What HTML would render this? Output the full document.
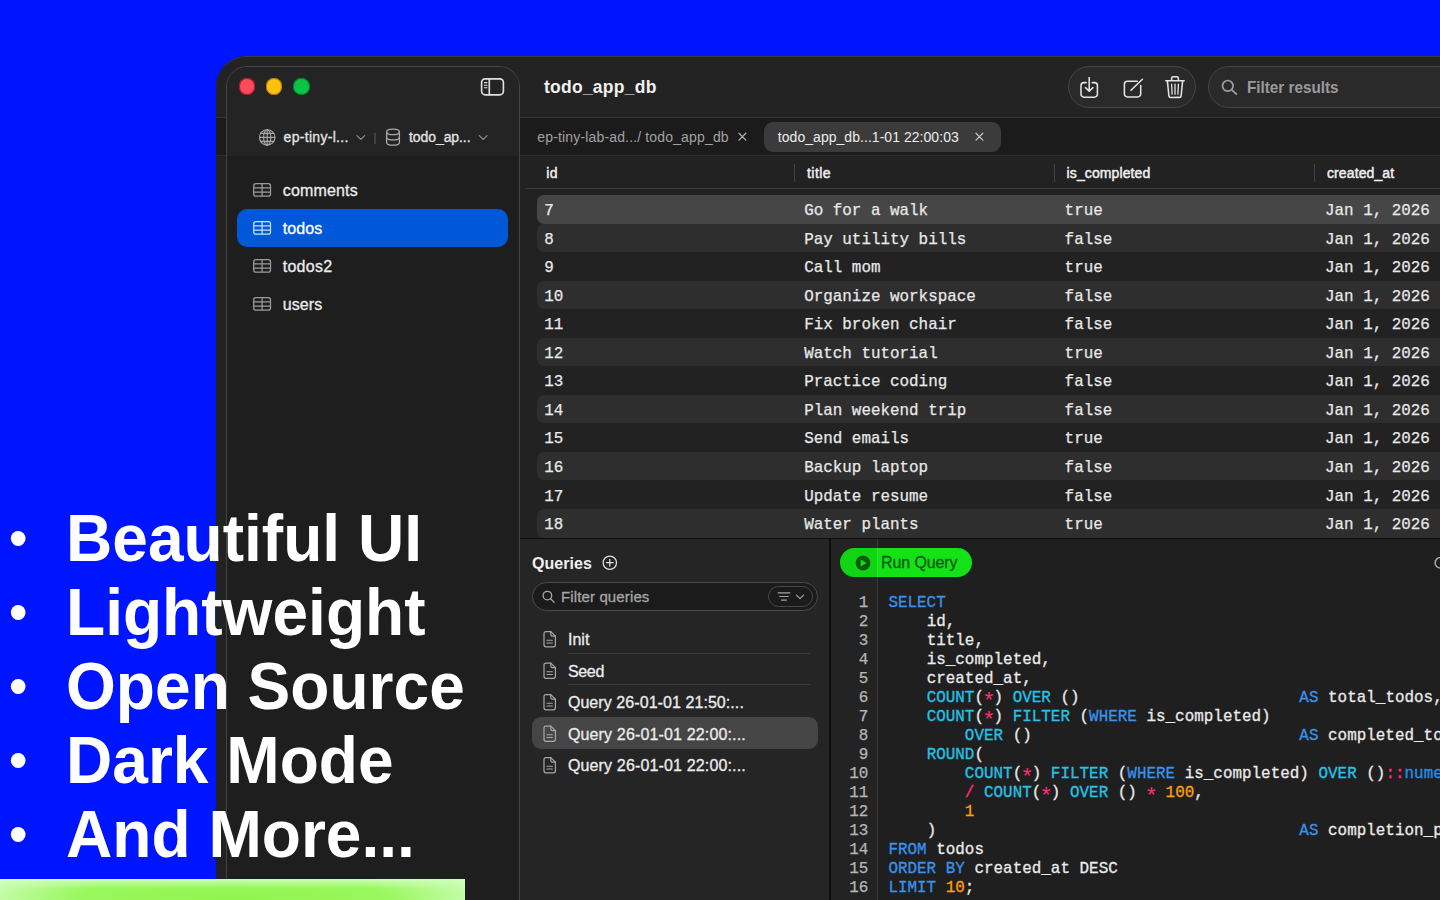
<!DOCTYPE html>
<html lang="en">
<head>
<meta charset="utf-8">
<title>todo_app_db</title>
<style>
*{box-sizing:border-box;margin:0;padding:0}
html,body{width:1440px;height:900px;overflow:hidden;background:#0015ff;font-family:"Liberation Sans",sans-serif;color:#e8e8e8}
.m{font-family:"Liberation Mono",monospace}
.a{position:absolute}
#win{position:absolute;left:216px;top:56px;width:1300px;height:900px;background:#222222;border-top-left-radius:31px;overflow:hidden}
#w{position:absolute;left:-216px;top:-56px;width:1516px;height:956px}
#wtop{left:216px;top:56px;width:1300px;height:30px;border-top:1px solid #3c3c3c;border-left:1px solid #2c2c2c;border-top-left-radius:31px}
#toolbar{left:216px;top:56px;width:1300px;height:61px;background:#232323}
#tabband{left:216px;top:117px;width:1300px;height:39px;background:#1b1b1b;border-top:1px solid #363636;border-bottom:1px solid #2e2e2e}
#side{left:226px;top:66px;width:294px;height:900px;background:#1e1e1e;border:1px solid #444444;border-bottom:none;border-radius:21px 21px 0 0;overflow:hidden}
#sidehead{left:0;top:0;width:294px;height:89px;background:#242424}
.tl{width:16.4px;height:16.4px;border-radius:50%;top:78.2px}
.pill{border:1px solid #454545;background:#2a2a2a;border-radius:22px}
.row{left:537px;width:960px;height:28.55px;border-radius:7px 0 0 7px}
.q{left:532px;width:285.5px;height:31.5px;border-radius:9px}
svg{position:absolute;overflow:visible}
.big{position:absolute;left:0;font-weight:700;color:#fff;white-space:pre}
</style>
</head>
<body>
<div id="win"><div id="w">
<div id="toolbar" class="a"></div>
<div id="tabband" class="a"></div>
<div id="wtop" class="a"></div>
<span style="position:absolute;left:544px;top:76.20px;line-height:22px;font-size:17.5px;font-weight:700;color:#f0f0f0;white-space:pre;letter-spacing:0.249px;">todo_app_db</span>
<div class="a pill" style="left:1068px;top:65.5px;width:128.2px;height:42.5px"></div>
<div class="a pill" style="left:1208px;top:65.5px;width:300px;height:42.5px"></div>
<svg style="left:0;top:0" width="1440" height="900" viewBox="0 0 1440 900" fill="none" stroke="#e4e4e4" stroke-width="1.55" stroke-linecap="round" stroke-linejoin="round">
<path d="M1086.2 82.6h-2.2a3 3 0 0 0-3 3v8.6a3 3 0 0 0 3 3h10.4a3 3 0 0 0 3-3v-8.6a3 3 0 0 0-3-3h-2.2"/>
<path d="M1089.2 77.6v13.4M1085.5 87.6l3.7 3.6 3.7-3.6"/>
<path d="M1137.2 81.3h-9.8a3 3 0 0 0-3 3v9.6a3 3 0 0 0 3 3h10.3a3 3 0 0 0 3-3v-8.4"/>
<path d="M1131 90.3L1142.4 79.2"/>
<path d="M1165.8 80.8h18.4M1171.6 80.6v-2.2a1.6 1.6 0 0 1 1.6-1.6h3.6a1.6 1.6 0 0 1 1.6 1.6v2.2"/>
<path d="M1167.4 81.2l1.5 14.6a1.8 1.8 0 0 0 1.8 1.6h8.6a1.8 1.8 0 0 0 1.8-1.6l1.5-14.6"/>
<path d="M1171.6 84.2l.5 10M1175 84.2v10M1178.4 84.2l-.5 10" stroke-width="1.3"/>
</svg>
<svg style="left:0;top:0" width="1440" height="900" viewBox="0 0 1440 900" fill="none" stroke="#a0a0a0" stroke-width="1.7" stroke-linecap="round">
<circle cx="1227.8" cy="85.8" r="5.3"/><path d="M1231.8 89.8l4.6 4.4"/></svg>
<span style="position:absolute;left:1247px;top:76.50px;line-height:21px;font-size:16.6px;font-weight:700;color:#9a9a9a;white-space:pre;transform:scaleX(0.9186);transform-origin:0 50%;">Filter results</span>
<span style="position:absolute;left:537.3px;top:127.80px;line-height:18px;font-size:14px;font-weight:400;color:#a2a2a2;white-space:pre;letter-spacing:0.156px;">ep-tiny-lab-ad.../ todo_app_db</span>
<div class="a" style="left:764px;top:121.5px;width:237px;height:30.5px;border-radius:9px;background:#3b3b3b"></div>
<span style="position:absolute;left:777.8px;top:127.80px;line-height:18px;font-size:14px;font-weight:400;color:#ececec;white-space:pre;letter-spacing:0.043px;">todo_app_db...1-01 22:00:03</span>
<svg style="left:0;top:0" width="1440" height="900" viewBox="0 0 1440 900" fill="none" stroke-width="1.3" stroke-linecap="round">
<path d="M739 133.3l6.8 6.8M745.8 133.3l-6.8 6.8" stroke="#b0b0b0"/>
<path d="M976 133.3l6.8 6.8M982.8 133.3l-6.8 6.8" stroke="#c4c4c4"/></svg>
<div id="side" class="a"><div id="sidehead" class="a"></div></div>
<div class="a tl" style="left:238.9px;background:#ff4a5a;box-shadow:inset 0 0 0 1px rgba(150,10,25,.75)"></div>
<div class="a tl" style="left:266px;background:#ffc20a;box-shadow:inset 0 0 0 1px rgba(150,100,0,.7)"></div>
<div class="a tl" style="left:293.3px;background:#0bc446;box-shadow:inset 0 0 0 1px rgba(0,100,30,.7)"></div>
<svg style="left:0;top:0" width="1440" height="900" viewBox="0 0 1440 900" fill="none" stroke="#e0e0e0" stroke-width="1.65" stroke-linecap="round">
<rect x="481.6" y="78.8" width="21.8" height="16" rx="3.6"/><path d="M489.3 79v15.6"/>
<path d="M484.4 82.6h2.6M484.4 85.2h2.6M484.4 87.8h2.6" stroke-width="1.1"/></svg>
<svg style="left:0;top:0" width="1440" height="900" viewBox="0 0 1440 900" fill="none" stroke="#a8a8a8" stroke-width="1.15" stroke-linecap="round" stroke-linejoin="round">
<circle cx="267.2" cy="137.4" r="7.7"/>
<ellipse cx="267.2" cy="137.4" rx="3.6" ry="7.7"/>
<path d="M267.2 129.7v15.4M259.5 137.4h15.4M260.7 133.4h13M260.7 141.4h13"/>
<path d="M357 135.6l3.8 3.8 3.8-3.8" stroke="#8c8c8c" stroke-width="1.3"/>
<path d="M375 133v10.6" stroke="#555" stroke-width="1.2"/>
<ellipse cx="393" cy="131.9" rx="6.4" ry="2.7" stroke-width="1.3"/>
<path d="M386.6 131.9v10.6c0 1.5 2.9 2.7 6.4 2.7s6.4-1.2 6.4-2.7v-10.6" stroke-width="1.3"/>
<path d="M386.6 137.2c0 1.5 2.9 2.7 6.4 2.7s6.4-1.2 6.4-2.7" stroke-width="1.3"/>
<path d="M479.4 135.6l3.8 3.8 3.8-3.8" stroke="#8c8c8c" stroke-width="1.3"/>
</svg>
<span style="position:absolute;left:283.6px;top:128.40px;line-height:18px;font-size:14px;font-weight:400;color:#e4e4e4;white-space:pre;-webkit-text-stroke:0.3px #e4e4e4;letter-spacing:0.294px;">ep-tiny-l...</span>
<span style="position:absolute;left:409px;top:128.40px;line-height:18px;font-size:14px;font-weight:400;color:#e4e4e4;white-space:pre;-webkit-text-stroke:0.3px #e4e4e4;letter-spacing:-0.078px;">todo_ap...</span>
<div class="a" style="left:237.2px;top:208.5px;width:271.2px;height:38px;border-radius:10px;background:#0058d8"></div>
<svg style="left:0;top:0" width="1440" height="900" viewBox="0 0 1440 900" fill="none" stroke="#9c9c9c" stroke-width="1.25"><rect x="253.7" y="183.70" width="16.8" height="12.5" rx="2.2"/><path d="M262.1 183.70v12.5M253.7 187.87h16.8M253.7 192.03h16.8"/></svg>
<span style="position:absolute;left:282.8px;top:180.80px;line-height:20px;font-size:16px;font-weight:400;color:#ececec;white-space:pre;-webkit-text-stroke:0.3px #ececec;letter-spacing:0.150px;">comments</span>
<svg style="left:0;top:0" width="1440" height="900" viewBox="0 0 1440 900" fill="none" stroke="#c9defa" stroke-width="1.25"><rect x="253.7" y="221.70" width="16.8" height="12.5" rx="2.2"/><path d="M262.1 221.70v12.5M253.7 225.87h16.8M253.7 230.03h16.8"/></svg>
<span style="position:absolute;left:282.8px;top:218.80px;line-height:20px;font-size:16px;font-weight:400;color:#ffffff;white-space:pre;-webkit-text-stroke:0.3px #ffffff;letter-spacing:0.072px;">todos</span>
<svg style="left:0;top:0" width="1440" height="900" viewBox="0 0 1440 900" fill="none" stroke="#9c9c9c" stroke-width="1.25"><rect x="253.7" y="259.70" width="16.8" height="12.5" rx="2.2"/><path d="M262.1 259.70v12.5M253.7 263.87h16.8M253.7 268.03h16.8"/></svg>
<span style="position:absolute;left:282.8px;top:256.80px;line-height:20px;font-size:16px;font-weight:400;color:#ececec;white-space:pre;-webkit-text-stroke:0.3px #ececec;letter-spacing:0.242px;">todos2</span>
<svg style="left:0;top:0" width="1440" height="900" viewBox="0 0 1440 900" fill="none" stroke="#9c9c9c" stroke-width="1.25"><rect x="253.7" y="297.70" width="16.8" height="12.5" rx="2.2"/><path d="M262.1 297.70v12.5M253.7 301.87h16.8M253.7 306.03h16.8"/></svg>
<span style="position:absolute;left:282.8px;top:294.80px;line-height:20px;font-size:16px;font-weight:400;color:#ececec;white-space:pre;-webkit-text-stroke:0.3px #ececec;letter-spacing:0.075px;">users</span>
<div class="a" style="left:520px;top:156px;width:1000px;height:382px;background:#222222"></div>
<div class="a" style="left:525.5px;top:187.8px;width:1000px;height:1px;background:#3c3c3c"></div>
<div class="a" style="left:794px;top:163.5px;width:1px;height:18px;background:#424242"></div>
<div class="a" style="left:1054px;top:163.5px;width:1px;height:18px;background:#424242"></div>
<div class="a" style="left:1314px;top:163.5px;width:1px;height:18px;background:#424242"></div>
<span style="position:absolute;left:546.3px;top:163.70px;line-height:18px;font-size:14px;font-weight:400;color:#f0f0f0;white-space:pre;-webkit-text-stroke:0.45px #f0f0f0;letter-spacing:0.297px;">id</span>
<span style="position:absolute;left:807px;top:163.70px;line-height:18px;font-size:14px;font-weight:400;color:#f0f0f0;white-space:pre;-webkit-text-stroke:0.45px #f0f0f0;letter-spacing:0.441px;">title</span>
<span style="position:absolute;left:1066.6px;top:163.70px;line-height:18px;font-size:14px;font-weight:400;color:#f0f0f0;white-space:pre;-webkit-text-stroke:0.45px #f0f0f0;letter-spacing:0.108px;">is_completed</span>
<span style="position:absolute;left:1327px;top:163.70px;line-height:18px;font-size:14px;font-weight:400;color:#f0f0f0;white-space:pre;-webkit-text-stroke:0.45px #f0f0f0;letter-spacing:0.103px;">created_at</span>
<div class="a row" style="top:195.00px;background:#464646;height:28.55px"></div>
<span class="m" style="position:absolute;left:544.3px;top:201.08px;line-height:20px;font-size:15.9px;font-weight:400;color:#e8e8e8;white-space:pre;-webkit-text-stroke:0.25px #e8e8e8;">7</span>
<span class="m" style="position:absolute;left:804.2px;top:201.08px;line-height:20px;font-size:15.9px;font-weight:400;color:#e8e8e8;white-space:pre;-webkit-text-stroke:0.25px #e8e8e8;">Go for a walk</span>
<span class="m" style="position:absolute;left:1064.6px;top:201.08px;line-height:20px;font-size:15.9px;font-weight:400;color:#e8e8e8;white-space:pre;-webkit-text-stroke:0.25px #e8e8e8;">true</span>
<span class="m" style="position:absolute;left:1325px;top:201.08px;line-height:20px;font-size:15.9px;font-weight:400;color:#e8e8e8;white-space:pre;-webkit-text-stroke:0.25px #e8e8e8;">Jan 1, 2026</span>
<div class="a row" style="top:223.55px;background:#2e2e2e;height:28.55px"></div>
<span class="m" style="position:absolute;left:544.3px;top:229.63px;line-height:20px;font-size:15.9px;font-weight:400;color:#e8e8e8;white-space:pre;-webkit-text-stroke:0.25px #e8e8e8;">8</span>
<span class="m" style="position:absolute;left:804.2px;top:229.63px;line-height:20px;font-size:15.9px;font-weight:400;color:#e8e8e8;white-space:pre;-webkit-text-stroke:0.25px #e8e8e8;">Pay utility bills</span>
<span class="m" style="position:absolute;left:1064.6px;top:229.63px;line-height:20px;font-size:15.9px;font-weight:400;color:#e8e8e8;white-space:pre;-webkit-text-stroke:0.25px #e8e8e8;">false</span>
<span class="m" style="position:absolute;left:1325px;top:229.63px;line-height:20px;font-size:15.9px;font-weight:400;color:#e8e8e8;white-space:pre;-webkit-text-stroke:0.25px #e8e8e8;">Jan 1, 2026</span>
<span class="m" style="position:absolute;left:544.3px;top:258.18px;line-height:20px;font-size:15.9px;font-weight:400;color:#e8e8e8;white-space:pre;-webkit-text-stroke:0.25px #e8e8e8;">9</span>
<span class="m" style="position:absolute;left:804.2px;top:258.18px;line-height:20px;font-size:15.9px;font-weight:400;color:#e8e8e8;white-space:pre;-webkit-text-stroke:0.25px #e8e8e8;">Call mom</span>
<span class="m" style="position:absolute;left:1064.6px;top:258.18px;line-height:20px;font-size:15.9px;font-weight:400;color:#e8e8e8;white-space:pre;-webkit-text-stroke:0.25px #e8e8e8;">true</span>
<span class="m" style="position:absolute;left:1325px;top:258.18px;line-height:20px;font-size:15.9px;font-weight:400;color:#e8e8e8;white-space:pre;-webkit-text-stroke:0.25px #e8e8e8;">Jan 1, 2026</span>
<div class="a row" style="top:280.65px;background:#2e2e2e;height:28.55px"></div>
<span class="m" style="position:absolute;left:544.3px;top:286.72px;line-height:20px;font-size:15.9px;font-weight:400;color:#e8e8e8;white-space:pre;-webkit-text-stroke:0.25px #e8e8e8;">10</span>
<span class="m" style="position:absolute;left:804.2px;top:286.72px;line-height:20px;font-size:15.9px;font-weight:400;color:#e8e8e8;white-space:pre;-webkit-text-stroke:0.25px #e8e8e8;">Organize workspace</span>
<span class="m" style="position:absolute;left:1064.6px;top:286.72px;line-height:20px;font-size:15.9px;font-weight:400;color:#e8e8e8;white-space:pre;-webkit-text-stroke:0.25px #e8e8e8;">false</span>
<span class="m" style="position:absolute;left:1325px;top:286.72px;line-height:20px;font-size:15.9px;font-weight:400;color:#e8e8e8;white-space:pre;-webkit-text-stroke:0.25px #e8e8e8;">Jan 1, 2026</span>
<span class="m" style="position:absolute;left:544.3px;top:315.27px;line-height:20px;font-size:15.9px;font-weight:400;color:#e8e8e8;white-space:pre;-webkit-text-stroke:0.25px #e8e8e8;">11</span>
<span class="m" style="position:absolute;left:804.2px;top:315.27px;line-height:20px;font-size:15.9px;font-weight:400;color:#e8e8e8;white-space:pre;-webkit-text-stroke:0.25px #e8e8e8;">Fix broken chair</span>
<span class="m" style="position:absolute;left:1064.6px;top:315.27px;line-height:20px;font-size:15.9px;font-weight:400;color:#e8e8e8;white-space:pre;-webkit-text-stroke:0.25px #e8e8e8;">false</span>
<span class="m" style="position:absolute;left:1325px;top:315.27px;line-height:20px;font-size:15.9px;font-weight:400;color:#e8e8e8;white-space:pre;-webkit-text-stroke:0.25px #e8e8e8;">Jan 1, 2026</span>
<div class="a row" style="top:337.75px;background:#2e2e2e;height:28.55px"></div>
<span class="m" style="position:absolute;left:544.3px;top:343.82px;line-height:20px;font-size:15.9px;font-weight:400;color:#e8e8e8;white-space:pre;-webkit-text-stroke:0.25px #e8e8e8;">12</span>
<span class="m" style="position:absolute;left:804.2px;top:343.82px;line-height:20px;font-size:15.9px;font-weight:400;color:#e8e8e8;white-space:pre;-webkit-text-stroke:0.25px #e8e8e8;">Watch tutorial</span>
<span class="m" style="position:absolute;left:1064.6px;top:343.82px;line-height:20px;font-size:15.9px;font-weight:400;color:#e8e8e8;white-space:pre;-webkit-text-stroke:0.25px #e8e8e8;">true</span>
<span class="m" style="position:absolute;left:1325px;top:343.82px;line-height:20px;font-size:15.9px;font-weight:400;color:#e8e8e8;white-space:pre;-webkit-text-stroke:0.25px #e8e8e8;">Jan 1, 2026</span>
<span class="m" style="position:absolute;left:544.3px;top:372.38px;line-height:20px;font-size:15.9px;font-weight:400;color:#e8e8e8;white-space:pre;-webkit-text-stroke:0.25px #e8e8e8;">13</span>
<span class="m" style="position:absolute;left:804.2px;top:372.38px;line-height:20px;font-size:15.9px;font-weight:400;color:#e8e8e8;white-space:pre;-webkit-text-stroke:0.25px #e8e8e8;">Practice coding</span>
<span class="m" style="position:absolute;left:1064.6px;top:372.38px;line-height:20px;font-size:15.9px;font-weight:400;color:#e8e8e8;white-space:pre;-webkit-text-stroke:0.25px #e8e8e8;">false</span>
<span class="m" style="position:absolute;left:1325px;top:372.38px;line-height:20px;font-size:15.9px;font-weight:400;color:#e8e8e8;white-space:pre;-webkit-text-stroke:0.25px #e8e8e8;">Jan 1, 2026</span>
<div class="a row" style="top:394.85px;background:#2e2e2e;height:28.55px"></div>
<span class="m" style="position:absolute;left:544.3px;top:400.93px;line-height:20px;font-size:15.9px;font-weight:400;color:#e8e8e8;white-space:pre;-webkit-text-stroke:0.25px #e8e8e8;">14</span>
<span class="m" style="position:absolute;left:804.2px;top:400.93px;line-height:20px;font-size:15.9px;font-weight:400;color:#e8e8e8;white-space:pre;-webkit-text-stroke:0.25px #e8e8e8;">Plan weekend trip</span>
<span class="m" style="position:absolute;left:1064.6px;top:400.93px;line-height:20px;font-size:15.9px;font-weight:400;color:#e8e8e8;white-space:pre;-webkit-text-stroke:0.25px #e8e8e8;">false</span>
<span class="m" style="position:absolute;left:1325px;top:400.93px;line-height:20px;font-size:15.9px;font-weight:400;color:#e8e8e8;white-space:pre;-webkit-text-stroke:0.25px #e8e8e8;">Jan 1, 2026</span>
<span class="m" style="position:absolute;left:544.3px;top:429.47px;line-height:20px;font-size:15.9px;font-weight:400;color:#e8e8e8;white-space:pre;-webkit-text-stroke:0.25px #e8e8e8;">15</span>
<span class="m" style="position:absolute;left:804.2px;top:429.47px;line-height:20px;font-size:15.9px;font-weight:400;color:#e8e8e8;white-space:pre;-webkit-text-stroke:0.25px #e8e8e8;">Send emails</span>
<span class="m" style="position:absolute;left:1064.6px;top:429.47px;line-height:20px;font-size:15.9px;font-weight:400;color:#e8e8e8;white-space:pre;-webkit-text-stroke:0.25px #e8e8e8;">true</span>
<span class="m" style="position:absolute;left:1325px;top:429.47px;line-height:20px;font-size:15.9px;font-weight:400;color:#e8e8e8;white-space:pre;-webkit-text-stroke:0.25px #e8e8e8;">Jan 1, 2026</span>
<div class="a row" style="top:451.95px;background:#2e2e2e;height:28.55px"></div>
<span class="m" style="position:absolute;left:544.3px;top:458.02px;line-height:20px;font-size:15.9px;font-weight:400;color:#e8e8e8;white-space:pre;-webkit-text-stroke:0.25px #e8e8e8;">16</span>
<span class="m" style="position:absolute;left:804.2px;top:458.02px;line-height:20px;font-size:15.9px;font-weight:400;color:#e8e8e8;white-space:pre;-webkit-text-stroke:0.25px #e8e8e8;">Backup laptop</span>
<span class="m" style="position:absolute;left:1064.6px;top:458.02px;line-height:20px;font-size:15.9px;font-weight:400;color:#e8e8e8;white-space:pre;-webkit-text-stroke:0.25px #e8e8e8;">false</span>
<span class="m" style="position:absolute;left:1325px;top:458.02px;line-height:20px;font-size:15.9px;font-weight:400;color:#e8e8e8;white-space:pre;-webkit-text-stroke:0.25px #e8e8e8;">Jan 1, 2026</span>
<span class="m" style="position:absolute;left:544.3px;top:486.57px;line-height:20px;font-size:15.9px;font-weight:400;color:#e8e8e8;white-space:pre;-webkit-text-stroke:0.25px #e8e8e8;">17</span>
<span class="m" style="position:absolute;left:804.2px;top:486.57px;line-height:20px;font-size:15.9px;font-weight:400;color:#e8e8e8;white-space:pre;-webkit-text-stroke:0.25px #e8e8e8;">Update resume</span>
<span class="m" style="position:absolute;left:1064.6px;top:486.57px;line-height:20px;font-size:15.9px;font-weight:400;color:#e8e8e8;white-space:pre;-webkit-text-stroke:0.25px #e8e8e8;">false</span>
<span class="m" style="position:absolute;left:1325px;top:486.57px;line-height:20px;font-size:15.9px;font-weight:400;color:#e8e8e8;white-space:pre;-webkit-text-stroke:0.25px #e8e8e8;">Jan 1, 2026</span>
<div class="a row" style="top:509.05px;background:#2e2e2e;height:28.55px"></div>
<span class="m" style="position:absolute;left:544.3px;top:515.12px;line-height:20px;font-size:15.9px;font-weight:400;color:#e8e8e8;white-space:pre;-webkit-text-stroke:0.25px #e8e8e8;">18</span>
<span class="m" style="position:absolute;left:804.2px;top:515.12px;line-height:20px;font-size:15.9px;font-weight:400;color:#e8e8e8;white-space:pre;-webkit-text-stroke:0.25px #e8e8e8;">Water plants</span>
<span class="m" style="position:absolute;left:1064.6px;top:515.12px;line-height:20px;font-size:15.9px;font-weight:400;color:#e8e8e8;white-space:pre;-webkit-text-stroke:0.25px #e8e8e8;">true</span>
<span class="m" style="position:absolute;left:1325px;top:515.12px;line-height:20px;font-size:15.9px;font-weight:400;color:#e8e8e8;white-space:pre;-webkit-text-stroke:0.25px #e8e8e8;">Jan 1, 2026</span>
<div class="a" style="left:520px;top:537.6px;width:1000px;height:1.4px;background:#0c0c0c"></div>
<div class="a" style="left:520px;top:539px;width:309px;height:400px;background:#252525"></div>
<span style="position:absolute;left:532px;top:554.00px;line-height:20px;font-size:16px;font-weight:700;color:#f0f0f0;white-space:pre;letter-spacing:0.058px;">Queries</span>
<svg style="left:0;top:0" width="1440" height="900" viewBox="0 0 1440 900" fill="none" stroke="#e0e0e0" stroke-width="1.25" stroke-linecap="round">
<circle cx="609.8" cy="562.7" r="6.7"/><path d="M606.4 562.7h6.8M609.8 559.3v6.8"/></svg>
<div class="a" style="left:532px;top:582px;width:285.5px;height:29px;border-radius:15px;background:#1b1b1b;border:1px solid #4a4a4a"></div>
<div class="a" style="left:768px;top:586.2px;width:45px;height:20.6px;border-radius:11px;border:1px solid #484848"></div>
<svg style="left:0;top:0" width="1440" height="900" viewBox="0 0 1440 900" fill="none" stroke="#a6a6a6" stroke-width="1.3" stroke-linecap="round" stroke-linejoin="round">
<circle cx="547.4" cy="595.6" r="4.3"/><path d="M550.6 598.8l3.6 3.6"/>
<path d="M778.2 592.9h11.6M779.8 596.5h8.4M781.6 600.1h4.8" stroke-width="1.2"/>
<path d="M796.4 595.2l3.6 3.4 3.6-3.4" stroke-width="1.15"/></svg>
<span style="position:absolute;left:561px;top:587.10px;line-height:19px;font-size:15px;font-weight:400;color:#a6a6a6;white-space:pre;-webkit-text-stroke:0.3px #a6a6a6;letter-spacing:0.128px;">Filter queries</span>
<svg style="left:0;top:0" width="1440" height="900" viewBox="0 0 1440 900" fill="none" stroke="#a8a8a8" stroke-width="1.2" stroke-linejoin="round" stroke-linecap="round"><path d="M546 631.6h4.8l4.6 4.6v8.6a2 2 0 0 1-2 2h-7.4a2 2 0 0 1-2-2v-11.2a2 2 0 0 1 2-2z"/><path d="M550.8 631.6v3a1.6 1.6 0 0 0 1.6 1.6h3"/><path d="M547 640.2h5.4M547 643.0h5.4" stroke-width="1.1"/></svg>
<span style="position:absolute;left:567.9px;top:630.00px;line-height:20px;font-size:16px;font-weight:400;color:#ececec;white-space:pre;-webkit-text-stroke:0.3px #ececec;letter-spacing:0.064px;">Init</span>
<div class="a" style="left:568px;top:652.80px;width:242px;height:1px;background:#3c3c3c"></div>
<svg style="left:0;top:0" width="1440" height="900" viewBox="0 0 1440 900" fill="none" stroke="#a8a8a8" stroke-width="1.2" stroke-linejoin="round" stroke-linecap="round"><path d="M546 663.1h4.8l4.6 4.6v8.6a2 2 0 0 1-2 2h-7.4a2 2 0 0 1-2-2v-11.2a2 2 0 0 1 2-2z"/><path d="M550.8 663.1v3a1.6 1.6 0 0 0 1.6 1.6h3"/><path d="M547 671.7h5.4M547 674.5h5.4" stroke-width="1.1"/></svg>
<span style="position:absolute;left:567.9px;top:661.50px;line-height:20px;font-size:16px;font-weight:400;color:#ececec;white-space:pre;-webkit-text-stroke:0.3px #ececec;letter-spacing:-0.294px;">Seed</span>
<div class="a" style="left:568px;top:684.30px;width:242px;height:1px;background:#3c3c3c"></div>
<svg style="left:0;top:0" width="1440" height="900" viewBox="0 0 1440 900" fill="none" stroke="#a8a8a8" stroke-width="1.2" stroke-linejoin="round" stroke-linecap="round"><path d="M546 694.6h4.8l4.6 4.6v8.6a2 2 0 0 1-2 2h-7.4a2 2 0 0 1-2-2v-11.2a2 2 0 0 1 2-2z"/><path d="M550.8 694.6v3a1.6 1.6 0 0 0 1.6 1.6h3"/><path d="M547 703.2h5.4M547 706.0h5.4" stroke-width="1.1"/></svg>
<span style="position:absolute;left:567.9px;top:693.00px;line-height:20px;font-size:16px;font-weight:400;color:#ececec;white-space:pre;-webkit-text-stroke:0.3px #ececec;letter-spacing:0.070px;">Query 26-01-01 21:50:...</span>
<div class="a q" style="top:717.30px;background:#454545"></div>
<svg style="left:0;top:0" width="1440" height="900" viewBox="0 0 1440 900" fill="none" stroke="#a8a8a8" stroke-width="1.2" stroke-linejoin="round" stroke-linecap="round"><path d="M546 726.1h4.8l4.6 4.6v8.6a2 2 0 0 1-2 2h-7.4a2 2 0 0 1-2-2v-11.2a2 2 0 0 1 2-2z"/><path d="M550.8 726.1v3a1.6 1.6 0 0 0 1.6 1.6h3"/><path d="M547 734.7h5.4M547 737.5h5.4" stroke-width="1.1"/></svg>
<span style="position:absolute;left:567.9px;top:724.50px;line-height:20px;font-size:16px;font-weight:400;color:#ececec;white-space:pre;-webkit-text-stroke:0.3px #ececec;letter-spacing:0.153px;">Query 26-01-01 22:00:...</span>
<svg style="left:0;top:0" width="1440" height="900" viewBox="0 0 1440 900" fill="none" stroke="#a8a8a8" stroke-width="1.2" stroke-linejoin="round" stroke-linecap="round"><path d="M546 757.6h4.8l4.6 4.6v8.6a2 2 0 0 1-2 2h-7.4a2 2 0 0 1-2-2v-11.2a2 2 0 0 1 2-2z"/><path d="M550.8 757.6v3a1.6 1.6 0 0 0 1.6 1.6h3"/><path d="M547 766.2h5.4M547 769.0h5.4" stroke-width="1.1"/></svg>
<span style="position:absolute;left:567.9px;top:756.00px;line-height:20px;font-size:16px;font-weight:400;color:#ececec;white-space:pre;-webkit-text-stroke:0.3px #ececec;letter-spacing:0.153px;">Query 26-01-01 22:00:...</span>
<div class="a" style="left:829px;top:539px;width:700px;height:400px;background:#1f1f1f"></div>
<div class="a" style="left:829px;top:539px;width:1.6px;height:400px;background:#0e0e0e"></div>
<div class="a" style="left:830.6px;top:539px;width:46.4px;height:400px;background:#232323"></div>
<div class="a" style="left:877px;top:539px;width:1px;height:400px;background:#383838"></div>
<div class="a" style="left:839.7px;top:548px;width:132.6px;height:29.4px;border-radius:15px;background:linear-gradient(90deg,#10d514 0,#10d514 37.3px,#2bea2e 37.3px,#2bea2e 38.3px,#12e216 38.3px)"></div>
<svg style="left:0;top:0" width="1440" height="900" viewBox="0 0 1440 900">
<circle cx="863" cy="563" r="7.4" fill="#0a5a0c"/><path d="M860.6 559.4l6.2 3.6-6.2 3.6z" fill="#12de16"/>
<circle cx="1440.3" cy="562.8" r="5.2" fill="none" stroke="#a8a8a8" stroke-width="1.5"/></svg>
<span style="position:absolute;left:881px;top:552.60px;line-height:20px;font-size:16px;font-weight:400;color:#0a5a0d;white-space:pre;-webkit-text-stroke:0.3px #0a5a0d;letter-spacing:-0.097px;">Run Query</span>
<span class="m a" style="left:830px;width:38.4px;text-align:right;top:593.10px;line-height:20px;font-size:15.9px;color:#b6b6b6;-webkit-text-stroke:0.25px #b6b6b6">1</span>
<span class="m a" style="left:888.4px;top:593.10px;line-height:20px;font-size:15.9px;white-space:pre;letter-spacing:0.02px;-webkit-text-stroke-width:0.3px"><span style="color:#3793ec">SELECT</span></span>
<span class="m a" style="left:830px;width:38.4px;text-align:right;top:612.10px;line-height:20px;font-size:15.9px;color:#b6b6b6;-webkit-text-stroke:0.25px #b6b6b6">2</span>
<span class="m a" style="left:888.4px;top:612.10px;line-height:20px;font-size:15.9px;white-space:pre;letter-spacing:0.02px;-webkit-text-stroke-width:0.3px">    <span style="color:#eaeaea">id,</span></span>
<span class="m a" style="left:830px;width:38.4px;text-align:right;top:631.10px;line-height:20px;font-size:15.9px;color:#b6b6b6;-webkit-text-stroke:0.25px #b6b6b6">3</span>
<span class="m a" style="left:888.4px;top:631.10px;line-height:20px;font-size:15.9px;white-space:pre;letter-spacing:0.02px;-webkit-text-stroke-width:0.3px">    <span style="color:#eaeaea">title,</span></span>
<span class="m a" style="left:830px;width:38.4px;text-align:right;top:650.10px;line-height:20px;font-size:15.9px;color:#b6b6b6;-webkit-text-stroke:0.25px #b6b6b6">4</span>
<span class="m a" style="left:888.4px;top:650.10px;line-height:20px;font-size:15.9px;white-space:pre;letter-spacing:0.02px;-webkit-text-stroke-width:0.3px">    <span style="color:#eaeaea">is_completed,</span></span>
<span class="m a" style="left:830px;width:38.4px;text-align:right;top:669.10px;line-height:20px;font-size:15.9px;color:#b6b6b6;-webkit-text-stroke:0.25px #b6b6b6">5</span>
<span class="m a" style="left:888.4px;top:669.10px;line-height:20px;font-size:15.9px;white-space:pre;letter-spacing:0.02px;-webkit-text-stroke-width:0.3px">    <span style="color:#eaeaea">created_at,</span></span>
<span class="m a" style="left:830px;width:38.4px;text-align:right;top:688.10px;line-height:20px;font-size:15.9px;color:#b6b6b6;-webkit-text-stroke:0.25px #b6b6b6">6</span>
<span class="m a" style="left:888.4px;top:688.10px;line-height:20px;font-size:15.9px;white-space:pre;letter-spacing:0.02px;-webkit-text-stroke-width:0.3px">    <span style="color:#25c2e6">COUNT</span><span style="color:#eaeaea">(</span><span style="color:#ff2f6d;display:inline-block;width:9.56px;text-align:center;font-size:22px;line-height:0;position:relative;top:6.2px;left:-1.8px;letter-spacing:0;-webkit-text-stroke-width:0">*</span><span style="color:#eaeaea">)</span> <span style="color:#25c2e6">OVER</span> <span style="color:#eaeaea">()</span>                       <span style="color:#3793ec">AS</span> <span style="color:#eaeaea">total_todos,</span></span>
<span class="m a" style="left:830px;width:38.4px;text-align:right;top:707.10px;line-height:20px;font-size:15.9px;color:#b6b6b6;-webkit-text-stroke:0.25px #b6b6b6">7</span>
<span class="m a" style="left:888.4px;top:707.10px;line-height:20px;font-size:15.9px;white-space:pre;letter-spacing:0.02px;-webkit-text-stroke-width:0.3px">    <span style="color:#25c2e6">COUNT</span><span style="color:#eaeaea">(</span><span style="color:#ff2f6d;display:inline-block;width:9.56px;text-align:center;font-size:22px;line-height:0;position:relative;top:6.2px;left:-1.8px;letter-spacing:0;-webkit-text-stroke-width:0">*</span><span style="color:#eaeaea">)</span> <span style="color:#25c2e6">FILTER</span> <span style="color:#eaeaea">(</span><span style="color:#3793ec">WHERE</span> <span style="color:#eaeaea">is_completed)</span></span>
<span class="m a" style="left:830px;width:38.4px;text-align:right;top:726.10px;line-height:20px;font-size:15.9px;color:#b6b6b6;-webkit-text-stroke:0.25px #b6b6b6">8</span>
<span class="m a" style="left:888.4px;top:726.10px;line-height:20px;font-size:15.9px;white-space:pre;letter-spacing:0.02px;-webkit-text-stroke-width:0.3px">        <span style="color:#25c2e6">OVER</span> <span style="color:#eaeaea">()</span>                            <span style="color:#3793ec">AS</span> <span style="color:#eaeaea">completed_todos,</span></span>
<span class="m a" style="left:830px;width:38.4px;text-align:right;top:745.10px;line-height:20px;font-size:15.9px;color:#b6b6b6;-webkit-text-stroke:0.25px #b6b6b6">9</span>
<span class="m a" style="left:888.4px;top:745.10px;line-height:20px;font-size:15.9px;white-space:pre;letter-spacing:0.02px;-webkit-text-stroke-width:0.3px">    <span style="color:#25c2e6">ROUND</span><span style="color:#eaeaea">(</span></span>
<span class="m a" style="left:830px;width:38.4px;text-align:right;top:764.10px;line-height:20px;font-size:15.9px;color:#b6b6b6;-webkit-text-stroke:0.25px #b6b6b6">10</span>
<span class="m a" style="left:888.4px;top:764.10px;line-height:20px;font-size:15.9px;white-space:pre;letter-spacing:0.02px;-webkit-text-stroke-width:0.3px">        <span style="color:#25c2e6">COUNT</span><span style="color:#eaeaea">(</span><span style="color:#ff2f6d;display:inline-block;width:9.56px;text-align:center;font-size:22px;line-height:0;position:relative;top:6.2px;left:-1.8px;letter-spacing:0;-webkit-text-stroke-width:0">*</span><span style="color:#eaeaea">)</span> <span style="color:#25c2e6">FILTER</span> <span style="color:#eaeaea">(</span><span style="color:#3793ec">WHERE</span> <span style="color:#eaeaea">is_completed)</span> <span style="color:#25c2e6">OVER</span> <span style="color:#eaeaea">()</span><span style="color:#ff2f6d">::</span><span style="color:#2590ee">numeric</span></span>
<span class="m a" style="left:830px;width:38.4px;text-align:right;top:783.10px;line-height:20px;font-size:15.9px;color:#b6b6b6;-webkit-text-stroke:0.25px #b6b6b6">11</span>
<span class="m a" style="left:888.4px;top:783.10px;line-height:20px;font-size:15.9px;white-space:pre;letter-spacing:0.02px;-webkit-text-stroke-width:0.3px">        <span style="color:#ff2f6d">/</span> <span style="color:#25c2e6">COUNT</span><span style="color:#eaeaea">(</span><span style="color:#ff2f6d;display:inline-block;width:9.56px;text-align:center;font-size:22px;line-height:0;position:relative;top:6.2px;left:-1.8px;letter-spacing:0;-webkit-text-stroke-width:0">*</span><span style="color:#eaeaea">)</span> <span style="color:#25c2e6">OVER</span> <span style="color:#eaeaea">()</span> <span style="color:#ff2f6d;display:inline-block;width:9.56px;text-align:center;font-size:22px;line-height:0;position:relative;top:6.2px;left:-1.8px;letter-spacing:0;-webkit-text-stroke-width:0">*</span> <span style="color:#ff9f0a">100</span><span style="color:#eaeaea">,</span></span>
<span class="m a" style="left:830px;width:38.4px;text-align:right;top:802.10px;line-height:20px;font-size:15.9px;color:#b6b6b6;-webkit-text-stroke:0.25px #b6b6b6">12</span>
<span class="m a" style="left:888.4px;top:802.10px;line-height:20px;font-size:15.9px;white-space:pre;letter-spacing:0.02px;-webkit-text-stroke-width:0.3px">        <span style="color:#ff9f0a">1</span></span>
<span class="m a" style="left:830px;width:38.4px;text-align:right;top:821.10px;line-height:20px;font-size:15.9px;color:#b6b6b6;-webkit-text-stroke:0.25px #b6b6b6">13</span>
<span class="m a" style="left:888.4px;top:821.10px;line-height:20px;font-size:15.9px;white-space:pre;letter-spacing:0.02px;-webkit-text-stroke-width:0.3px">    <span style="color:#eaeaea">)</span>                                      <span style="color:#3793ec">AS</span> <span style="color:#eaeaea">completion_percentage</span></span>
<span class="m a" style="left:830px;width:38.4px;text-align:right;top:840.10px;line-height:20px;font-size:15.9px;color:#b6b6b6;-webkit-text-stroke:0.25px #b6b6b6">14</span>
<span class="m a" style="left:888.4px;top:840.10px;line-height:20px;font-size:15.9px;white-space:pre;letter-spacing:0.02px;-webkit-text-stroke-width:0.3px"><span style="color:#3793ec">FROM</span> <span style="color:#eaeaea">todos</span></span>
<span class="m a" style="left:830px;width:38.4px;text-align:right;top:859.10px;line-height:20px;font-size:15.9px;color:#b6b6b6;-webkit-text-stroke:0.25px #b6b6b6">15</span>
<span class="m a" style="left:888.4px;top:859.10px;line-height:20px;font-size:15.9px;white-space:pre;letter-spacing:0.02px;-webkit-text-stroke-width:0.3px"><span style="color:#3793ec">ORDER</span> <span style="color:#3793ec">BY</span> <span style="color:#eaeaea">created_at DESC</span></span>
<span class="m a" style="left:830px;width:38.4px;text-align:right;top:878.10px;line-height:20px;font-size:15.9px;color:#b6b6b6;-webkit-text-stroke:0.25px #b6b6b6">16</span>
<span class="m a" style="left:888.4px;top:878.10px;line-height:20px;font-size:15.9px;white-space:pre;letter-spacing:0.02px;-webkit-text-stroke-width:0.3px"><span style="color:#3793ec">LIMIT</span> <span style="color:#ff9f0a">10</span><span style="color:#eaeaea">;</span></span>
<span class="m a" style="left:830px;width:38.4px;text-align:right;top:897.10px;line-height:20px;font-size:15.9px;color:#b6b6b6;-webkit-text-stroke:0.25px #b6b6b6">17</span>
</div></div>
<span class="big" style="left:9.3px;top:501.70px;line-height:74px;font-size:51px">•</span>
<span class="big" style="left:66.1px;top:501.20px;line-height:74px;font-size:66px;transform:scaleX(.971);transform-origin:0 50%">Beautiful UI</span>
<span class="big" style="left:9.3px;top:575.70px;line-height:74px;font-size:51px">•</span>
<span class="big" style="left:66.1px;top:575.20px;line-height:74px;font-size:66px;transform:scaleX(.971);transform-origin:0 50%">Lightweight</span>
<span class="big" style="left:9.3px;top:649.70px;line-height:74px;font-size:51px">•</span>
<span class="big" style="left:66.1px;top:649.20px;line-height:74px;font-size:66px;transform:scaleX(.971);transform-origin:0 50%">Open Source</span>
<span class="big" style="left:9.3px;top:723.70px;line-height:74px;font-size:51px">•</span>
<span class="big" style="left:66.1px;top:723.20px;line-height:74px;font-size:66px;transform:scaleX(.971);transform-origin:0 50%">Dark Mode</span>
<span class="big" style="left:9.3px;top:797.70px;line-height:74px;font-size:51px">•</span>
<span class="big" style="left:66.1px;top:797.20px;line-height:74px;font-size:66px;transform:scaleX(.971);transform-origin:0 50%">And More...</span>
<div class="a" style="left:0;top:879px;width:465px;height:21px;background:linear-gradient(180deg,rgba(208,255,190,.9) 0,rgba(208,255,190,0) 48%),radial-gradient(ellipse 245px 70px at 50% 120%,#90f54d 0%,#99f75c 62%,#c8fdb0 100%)"></div>
</body>
</html>
